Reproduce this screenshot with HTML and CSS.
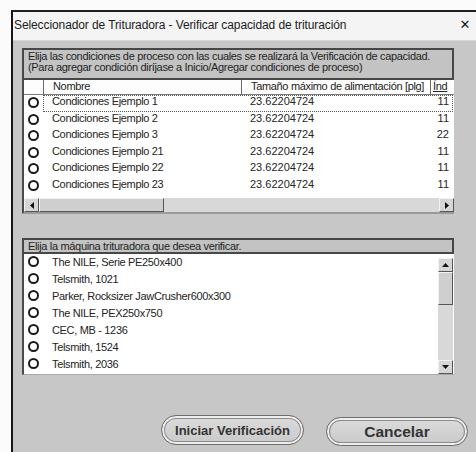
FILE: index.html
```html
<!DOCTYPE html>
<html lang="es">
<head>
<meta charset="utf-8">
<title>Verificar capacidad de trituración</title>
<link rel="stylesheet" href="styles.css">
</head>
<body>
<div class="window">
  <div class="titlebar">
    <span class="title">Seleccionador de Trituradora - Verificar capacidad de trituración</span>
    <span class="close" aria-label="Cerrar">✕</span>
  </div>
  <div class="client">
    <section class="panel">
      <div class="caption caption-two">Elija las condiciones de proceso con las cuales se realizará la Verificación de capacidad.<br>(Para agregar condición diríjase a Inicio/Agregar condiciones de proceso)</div>
      <div class="grid">
        <div class="grid-row grid-head">
          <div class="cell cell-radio"></div>
          <div class="cell cell-name">Nombre</div>
          <div class="cell cell-size">Tamaño máximo de alimentación [plg]</div>
          <div class="cell cell-idx">Índ</div>
        </div>
        <div class="grid-body">
          <div class="grid-row focused">
            <div class="cell cell-radio"><span class="radio"></span></div>
            <div class="cell cell-name">Condiciones Ejemplo 1</div>
            <div class="cell cell-size">23.62204724</div>
            <div class="cell cell-idx">11</div>
          </div>
          <div class="grid-row">
            <div class="cell cell-radio"><span class="radio"></span></div>
            <div class="cell cell-name">Condiciones Ejemplo 2</div>
            <div class="cell cell-size">23.62204724</div>
            <div class="cell cell-idx">11</div>
          </div>
          <div class="grid-row">
            <div class="cell cell-radio"><span class="radio"></span></div>
            <div class="cell cell-name">Condiciones Ejemplo 3</div>
            <div class="cell cell-size">23.62204724</div>
            <div class="cell cell-idx">22</div>
          </div>
          <div class="grid-row">
            <div class="cell cell-radio"><span class="radio"></span></div>
            <div class="cell cell-name">Condiciones Ejemplo 21</div>
            <div class="cell cell-size">23.62204724</div>
            <div class="cell cell-idx">11</div>
          </div>
          <div class="grid-row">
            <div class="cell cell-radio"><span class="radio"></span></div>
            <div class="cell cell-name">Condiciones Ejemplo 22</div>
            <div class="cell cell-size">23.62204724</div>
            <div class="cell cell-idx">11</div>
          </div>
          <div class="grid-row">
            <div class="cell cell-radio"><span class="radio"></span></div>
            <div class="cell cell-name">Condiciones Ejemplo 23</div>
            <div class="cell cell-size">23.62204724</div>
            <div class="cell cell-idx">11</div>
          </div>
        </div>
        <div class="hscroll">
          <div class="sb-btn"><svg width="4" height="7" viewBox="0 0 4 7"><path d="M4 0 L0 3.5 L4 7 Z" fill="#111"/></svg></div>
          <div class="sb-thumb-h"></div>
          <div class="sb-track"></div>
          <div class="sb-btn"><svg width="4" height="7" viewBox="0 0 4 7"><path d="M0 0 L4 3.5 L0 7 Z" fill="#111"/></svg></div>
        </div>
      </div>
    </section>

    <section class="panel panel-machines">
      <div class="caption">Elija la máquina trituradora que desea verificar.</div>
      <div class="list">
        <ul class="items">
          <li><span class="radio"></span>The NILE, Serie PE250x400</li>
          <li><span class="radio"></span>Telsmith, 1021</li>
          <li><span class="radio"></span>Parker, Rocksizer JawCrusher600x300</li>
          <li><span class="radio"></span>The NILE, PEX250x750</li>
          <li><span class="radio"></span>CEC, MB - 1236</li>
          <li><span class="radio"></span>Telsmith, 1524</li>
          <li><span class="radio"></span>Telsmith, 2036</li>
        </ul>
        <div class="vscroll">
          <div class="sb-btn"><svg width="7" height="4" viewBox="0 0 7 4"><path d="M0 4 L3.5 0 L7 4 Z" fill="#111"/></svg></div>
          <div class="sb-thumb-v"></div>
          <div class="sb-track"></div>
          <div class="sb-btn"><svg width="7" height="4" viewBox="0 0 7 4"><path d="M0 0 L3.5 4 L7 0 Z" fill="#111"/></svg></div>
        </div>
      </div>
    </section>

    <div class="actions">
      <button class="pill pill-start" type="button">Iniciar Verificación</button>
      <button class="pill pill-cancel" type="button">Cancelar</button>
    </div>
  </div>
</div>
</body>
</html>
```

FILE: styles.css
```css
html, body {
  margin: 0;
  padding: 0;
}

body {
  width: 476px;
  height: 452px;
  overflow: hidden;
  background: #fbfbfb;
  font-family: "Liberation Sans", Arial, sans-serif;
  font-size: 11px;
  letter-spacing: -0.33px;
  color: #242424;
}

/* dialog frame, running off the right and bottom edges */
.window {
  margin: 10px 0 0 11px;
  width: 465px;
  height: 442px;
  box-sizing: border-box;
  border-top: 2px solid #1e1e1e;
  border-left: 2px solid #161616;
  display: flex;
  flex-direction: column;
  background: #c7c7c7;
}

.titlebar {
  height: 26px;
  flex: none;
  display: flex;
  align-items: center;
  padding: 0 0 2px 1px;
  background: #f4f4f4;
  border-bottom: 1px solid #d6d6d6;
}

.title {
  flex: 1;
  font-family: "Liberation Sans", Arial, sans-serif;
  font-size: 12px;
  letter-spacing: -0.1px;
  color: #1c1c1c;
}

.close {
  flex: none;
  width: 12px;
  margin: 0 5px 2px 0;
  font-family: "DejaVu Sans", sans-serif;
  font-size: 13px;
  line-height: 13px;
  letter-spacing: 0;
  text-align: center;
  color: #1a1a1a;
}

.client {
  flex: 1;
  display: flex;
  flex-direction: column;
  padding: 7px 8px 0 9px;
  background: #c7c7c7;
}

.panel {
  width: 432px;
  display: flex;
  flex-direction: column;
}

.panel-machines {
  margin-top: 24px;
}

.caption {
  box-sizing: border-box;
  border: 2px solid #474747;
  background: #c3c3c3;
  padding: 0 4px;
  height: 16px;
  line-height: 12px;
  white-space: nowrap;
  overflow: hidden;
  color: #1f1f1f;
}

.caption-two {
  height: 32px;
  padding-top: 1px;
  line-height: 11px;
}

/* process conditions grid */
.grid {
  height: 134px;
  box-sizing: border-box;
  border-left: 2px solid #4a4a4a;
  border-bottom: 2px solid #9a9a9a;
  background: #fff;
  display: flex;
  flex-direction: column;
  overflow: hidden;
}

.grid-row {
  display: grid;
  grid-template-columns: 19px 198px 189px 24px;
  height: 16.5px;
  align-items: start;
  line-height: 13px;
  position: relative;
}

.grid-head {
  height: 15px;
  box-sizing: border-box;
  border-bottom: 1px solid #7a7a7a;
  background: #fdfdfd;
}

.grid-head .cell {
  height: 100%;
  line-height: 13px;
  border-left: 1px solid #6a6a6a;
  box-sizing: border-box;
}

.grid-head .cell-radio {
  border-left: none;
}

.grid-head .cell-idx {
  padding-left: 2px;
  text-align: left;
  text-decoration: underline;
}

.cell {
  white-space: nowrap;
  overflow: hidden;
}

.cell-radio {
  display: flex;
  justify-content: center;
  padding-top: 2px;
}

.cell-name,
.cell-size {
  padding-left: 9px;
}

.grid-body .cell-size,
.grid-body .cell-idx {
  letter-spacing: 0;
}

.cell-idx {
  text-align: right;
  padding-right: 5px;
}

.grid-body {
  flex: 1;
}

/* keyboard focus outline on the current row */
.focused::after {
  content: "";
  position: absolute;
  left: 19px;
  right: 1px;
  top: 0;
  bottom: 0;
  border: 1px dotted #555;
}

.radio {
  width: 11px;
  height: 11px;
  box-sizing: border-box;
  border: 2.2px solid #1a1a1a;
  border-radius: 50%;
  background: #fff;
  flex: none;
}

/* scrollbars */
.hscroll {
  height: 14px;
  display: flex;
  background: #d3d3d3;
}

.sb-btn {
  width: 15px;
  height: 14px;
  box-sizing: border-box;
  background: #d6d6d6;
  border-top: 1px solid #f2f2f2;
  border-left: 1px solid #f2f2f2;
  border-right: 1px solid #555;
  border-bottom: 1px solid #555;
  display: flex;
  align-items: center;
  justify-content: center;
  flex: none;
}

.sb-thumb-h {
  width: 125px;
  flex: none;
  box-sizing: border-box;
  background: #cfcfcf;
  border-top: 1px solid #f2f2f2;
  border-left: 1px solid #f2f2f2;
  border-right: 1px solid #555;
  border-bottom: 1px solid #555;
}

.sb-track {
  flex: 1;
  background: #d8d8d8;
}

/* crusher machine list */
.list {
  height: 121px;
  box-sizing: border-box;
  border-left: 2px solid #4a4a4a;
  border-bottom: 1px solid #a9a9a9;
  background: #fff;
  display: flex;
}

.items {
  list-style: none;
  margin: 0;
  padding: 0;
  flex: 1;
}

.items li {
  height: 17px;
  box-sizing: border-box;
  padding-bottom: 2px;
  display: flex;
  align-items: center;
  white-space: nowrap;
}

.items .radio {
  margin: 0 13px 0 4px;
}

.vscroll {
  width: 15px;
  margin: 4px 1px 0 0;
  display: flex;
  flex-direction: column;
  background: #d3d3d3;
}

.sb-thumb-v {
  height: 33px;
  flex: none;
  box-sizing: border-box;
  background: #cfcfcf;
  border-top: 1px solid #f2f2f2;
  border-left: 1px solid #f2f2f2;
  border-right: 1px solid #555;
  border-bottom: 1px solid #555;
}

/* dialog buttons */
.actions {
  margin-top: 40px;
  display: flex;
  justify-content: flex-end;
  align-items: flex-start;
  gap: 22px;
}

.pill {
  box-sizing: border-box;
  border: 1px solid #6e6e6e;
  border-radius: 16px;
  background: linear-gradient(#dcdcdc, #c9c9c9);
  box-shadow: inset 0 0 0 2px #eeeeee, inset 0 0 0 3px #8c8c8c;
  font-family: "Liberation Sans", Arial, sans-serif;
  font-weight: bold;
  letter-spacing: 0;
  color: #333;
  padding: 0;
}

.pill-start {
  width: 143px;
  height: 30px;
  font-size: 13px;
}

.pill-cancel {
  width: 142px;
  height: 29px;
  margin-top: 2px;
  font-size: 15.5px;
}
```
